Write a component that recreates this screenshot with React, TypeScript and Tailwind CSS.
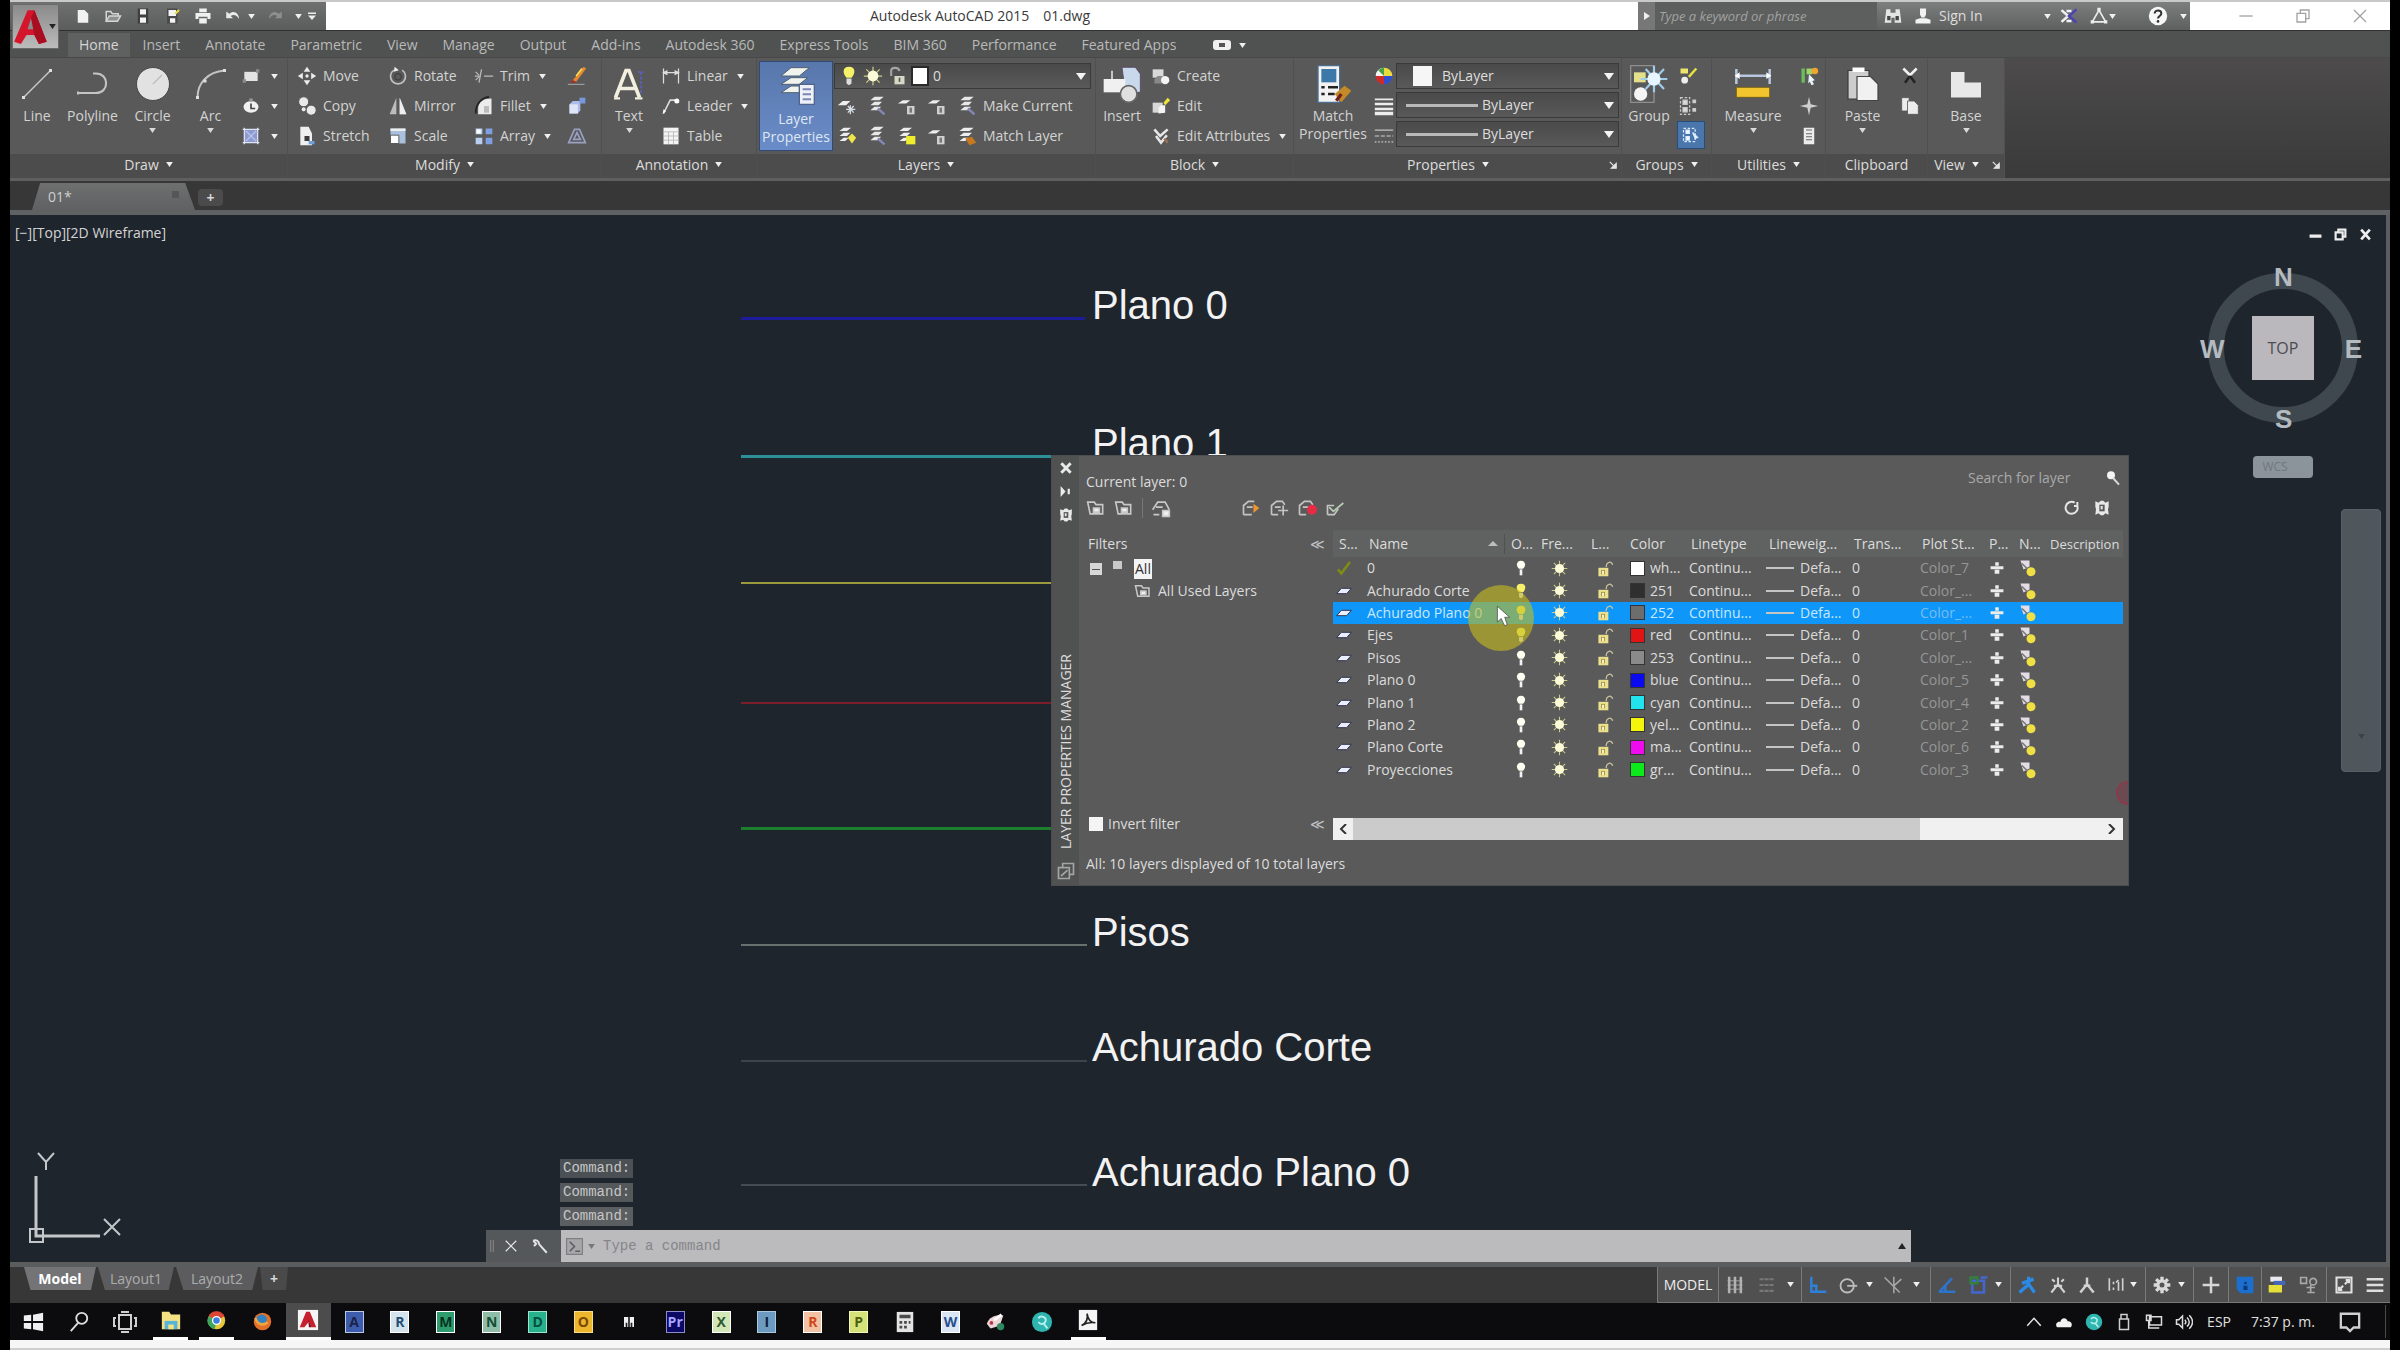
import { ReactNode } from "react";

const icons: Record<string, ReactNode> = {
  newFile: <path d="M5 4h9l5 5v12H5z" fill="#f1f1f1" />,
  open: (
    <g fill="none" stroke="#d5d5d5" strokeWidth="2">
      <path d="M3 19V6h6l2 3h8v3" />
      <path d="M3 19l4-7h15l-4 7z" fill="#8f8f8f" />
    </g>
  ),
  save: (
    <g>
      <path d="M5 2h14v20H5z" fill="#3f3f3f" />
      <path d="M8 3h8v7H8zM8 14h8v7H8z" fill="#f4f4f4" />
    </g>
  ),
  saveAs: (
    <g>
      <path d="M4 2h14v20H4z" fill="#4a4a4a" />
      <path d="M6 4h10v8H6zM8 15h7v6H8z" fill="#f4f4f4" />
      <path d="M14 8l5-5 2 2-5 5z" fill="#e7dc3a" />
    </g>
  ),
  print: (
    <g fill="#f0f0f0">
      <path d="M7 2h10v5H7z" />
      <path d="M2 8h20v8h-4v-3H6v3H2z" />
      <path d="M7 15h10v7H7z" />
    </g>
  ),
  undo: <path d="M3 6v9h9l-3-3c4-3 8-1 11 4 0-8-7-12-13-7z" fill="#e9e9e9" />,
  redo: <path d="M21 6v9h-9l3-3c-4-3-8-1-11 4 0-8 7-12 13-7z" fill="#8d8f8f" />,
  customize: (
    <g fill="#ededed">
      <path d="M4 5h16v3H4zM4 11h16l-8 9z" />
    </g>
  ),
  binoculars: (
    <g fill="#e4e4e4">
      <path d="M4 4h5v4h6V4h5l2 16h-8v-6h-4v6H2z" />
      <path d="M5 12h4v5H5zM15 12h4v5h-4z" fill="#444" />
    </g>
  ),
  person: (
    <g fill="#f2f2f2">
      <path d="M8 2h8v8l-2 4h-4l-2-4z" />
      <path d="M2 17l6-2h8l6 2v5H2z" />
    </g>
  ),
  exchange: (
    <g fill="none" strokeWidth="3">
      <path d="M3 5l8 7-8 7" stroke="#f1f1f1" />
      <path d="M21 4l-9 8 9 8" stroke="#4a43b8" />
      <path d="M9 6h6M9 18h6" stroke="#f1f1f1" />
    </g>
  ),
  a360: (
    <g fill="none" stroke="#ececec" strokeWidth="2">
      <path d="M12 5L4 19h16z" />
      <path d="M10 2h4v4h-4zM2 17h4v4H2zM18 17h4v4h-4z" fill="#ececec" stroke="none" />
    </g>
  ),
  help: (
    <g>
      <circle cx="12" cy="12" r="11" fill="#f7f7f7" />
      <path d="M8 9c0-5 8-5 8 0 0 3-4 3-4 6" fill="none" stroke="#333" strokeWidth="2.4" />
      <circle cx="12" cy="18.500" r="1.600" fill="#333" />
    </g>
  ),
  line: (
    <g>
      <path d="M3 21L21 3" stroke="#c9c9c9" strokeWidth="1" />
      <path d="M2 20h2v2H2zM20 2h2v2h-2z" fill="#e0e0e0" />
    </g>
  ),
  polyline: <path d="M2 18h12c9 0 9-13 0-13h-2M2 17v2" fill="none" stroke="#c4c4c4" strokeWidth="1.400" />,
  circle: (
    <g>
      <circle cx="12" cy="12" r="11" fill="#e2e2e2" stroke="#3f3f3f" strokeWidth=".6" />
      <path d="M12 12l6-6" stroke="#bdbdbd" strokeWidth="1" />
    </g>
  ),
  arc: (
    <g>
      <path d="M3 21C3 11 10 4 21 3" fill="none" stroke="#c4c4c4" strokeWidth="1.300" />
      <path d="M2 20h2v2H2zM7 9h2v2H7zM20 2h2v2h-2z" fill="#e0e0e0" />
    </g>
  ),
  rectangle: (
    <g>
      <path d="M4 7h16v11H4z" fill="#e4e4e4" />
      <path d="M2 16h4v4H2zM18 4h4v4h-4z" fill="#8c8c8c" />
    </g>
  ),
  ellipse: (
    <g>
      <ellipse cx="12" cy="13" rx="9" ry="7" fill="#f0f0f0" />
      <path d="M12 9v6h5" fill="none" stroke="#444" strokeWidth="2" />
      <path d="M10 3h4v4h-4z" fill="#999" />
    </g>
  ),
  hatch: (
    <g>
      <path d="M4 4h16v16H4z" fill="#8d9bd2" />
      <path d="M6 18L18 6M6 6l12 12" stroke="#b9c3ea" strokeWidth="1.500" />
      <path d="M2 4h20M2 20h20M4 2v20M20 2v20" stroke="#dfe3f4" strokeWidth="1.500" />
    </g>
  ),
  move: (
    <g fill="#ececec">
      <path d="M12 1l4 6H8zM12 23l4-6H8zM1 12l6-4v8zM23 12l-6-4v8z" />
      <circle cx="12" cy="12" r="2" />
    </g>
  ),
  copy: (
    <g fill="#e9e9e9" stroke="#4a4a4a">
      <circle cx="8" cy="7" r="6" />
      <circle cx="17" cy="17" r="6" />
      <circle cx="8" cy="16" r="3" />
    </g>
  ),
  stretch: (
    <g>
      <path d="M4 1h10l4 8v14H4z" fill="#f0f0f0" />
      <path d="M9 12h6v6H9z" fill="#3a3a3a" />
      <path d="M14 18h7v4h-7z" fill="#6f9fd6" />
    </g>
  ),
  rotate: (
    <g fill="none">
      <path d="M7 5a9 9 0 1 0 10 0" stroke="#c0c0c0" strokeWidth="2" />
      <path d="M8 1l-1 6 6-2z" fill="#eee" />
      <circle cx="12" cy="13" r="4" stroke="#333" strokeWidth="1" />
    </g>
  ),
  mirror: (
    <g>
      <path d="M10 2v20H2zM14 2v20h8z" fill="#bdbdbd" />
      <path d="M14 2v20h8z" fill="#eee" />
    </g>
  ),
  scale: (
    <g>
      <path d="M3 3h18v18H3z" fill="#a9c1dd" />
      <path d="M3 3h18v3H3z" fill="#eee" />
      <path d="M3 11h10v10H3z" fill="#fff" stroke="#444" />
    </g>
  ),
  trim: (
    <g stroke="#bcbcbc" strokeWidth="1.500" fill="none">
      <path d="M1 12h6M12 12h11M9 4L6 20" />
      <path d="M2 7l4 4M2 17l4-4" />
    </g>
  ),
  fillet: (
    <g>
      <path d="M5 22V14C6 7 11 3 21 3v19z" fill="#ececec" />
      <path d="M2 21C2 9 9 2 18 1" fill="none" stroke="#222" strokeWidth="2" />
      <path d="M12 12h6v8h-6z" fill="#bbb" />
    </g>
  ),
  array: (
    <g>
      <path d="M2 3h8v7H2zM2 14h8v8H2z" fill="#b8cdf0" />
      <path d="M14 3h8v7h-8zM14 14h8v8h-8z" fill="#7f9fe0" />
      <path d="M3 4h5v5H3z" fill="#fff" />
    </g>
  ),
  erase: (
    <g>
      <path d="M20 1L7 17l4 2L23 3z" fill="#e8892c" />
      <path d="M7 17l-3 4 7-2z" fill="#c02222" />
      <path d="M1 22h20" stroke="#bcbcbc" strokeWidth="1" />
      <path d="M18 3l-7 9" stroke="#f6e058" strokeWidth="2" />
    </g>
  ),
  explode: (
    <g>
      <path d="M3 10l4-4h9v11l-3 4H3z" fill="#aebde8" />
      <path d="M3 10h10v11H3z" fill="#dfe5f7" />
      <path d="M15 2h7v7h-7z" fill="#7897dc" />
    </g>
  ),
  offset: <path d="M2 20L9 4h6l7 16zM8 16h8L12 8z" fill="none" stroke="#9aa1c4" strokeWidth="2" />,
  text: (
    <g fill="none">
      <path d="M3 21L10 3h2l7 18M6 15h10" stroke="#f2efe0" strokeWidth="2.400" />
      <path d="M2 21.500h4M16 21.500h5" stroke="#f2efe0" strokeWidth="1.500" />
      <path d="M18 4h4M20 4v14" stroke="#5b61c9" strokeWidth="1" strokeDasharray="2 1" />
    </g>
  ),
  linear: <path d="M3 3v18M21 3v18M3 8h18M3 8l4-2v4zM21 8l-4-2v4z" fill="#ddd" stroke="#ddd" strokeWidth="1.500" />,
  leader: (
    <g fill="none">
      <path d="M3 21L11 5h6" stroke="#d8d8d8" strokeWidth="2" />
      <circle cx="19" cy="6" r="3" fill="#fff" />
      <path d="M2 22l1-6 3 2z" fill="#fff" />
    </g>
  ),
  table: (
    <g>
      <path d="M3 2h18v20H3z" fill="#f4f4f4" />
      <path d="M3 7h18M9 7v15M15 7v15M3 12h18M3 17h18" stroke="#b6b6b6" strokeWidth="1" />
    </g>
  ),
  layerProps: (
    <g>
      <path d="M3 6l6-5h11l-6 5zM3 11l6-4h10l-5 4zM3 16l6-4h8l-3 4z" fill="#f1f3ee" stroke="#50606e" strokeWidth=".6" />
      <path d="M14 11h9v12h-9z" fill="#eef1f8" stroke="#52648c" strokeWidth=".8" />
      <path d="M16 14h5M16 17h5M16 20h5" stroke="#7a87b4" strokeWidth="1.200" />
    </g>
  ),
  bulb: (
    <g>
      <path d="M12 1c-8 0-8 8-3 13h6c5-5 5-13-3-13z" fill="#f6f06a" />
      <path d="M9 15h6v6l-3 2-3-2z" fill="#ddd" />
    </g>
  ),
  sun: (
    <g>
      <path d="M12 1v22M1 12h22M4 4l16 16M20 4L4 20" stroke="#cdcc8a" strokeWidth="1.500" />
      <circle cx="12" cy="12" r="6.500" fill="#fbfbd8" />
    </g>
  ),
  unlock: (
    <g>
      <path d="M5 12V6c0-5 9-5 10 0" fill="none" stroke="#a5a5a5" strokeWidth="2.500" />
      <path d="M9 12h12v10H9z" fill="#d8d8c6" />
      <path d="M14 14h2v5h-2z" fill="#555" />
    </g>
  ),
  layerA: (
    <g>
      <path d="M1 9l6-4h9l-5 4z" fill="#eee" />
      <path d="M12 12h9v10h-9z" fill="#d0d0d0" />
      <path d="M15 14h3v6h-3z" fill="#777" />
    </g>
  ),
  layerB: (
    <g>
      <path d="M4 5l5-4h11l-5 4zM4 11l5-4h9l-4 4zM4 17l5-4h8l-4 4z" fill="#e8e8e8" />
      <path d="M13 15l8 7" stroke="#8487b5" strokeWidth="3" />
    </g>
  ),
  layerSun: (
    <g>
      <path d="M1 11l6-5h9l-5 5z" fill="#eee" />
      <path d="M16 11v11M11 16h11M13 12l7 8M20 12l-7 8" stroke="#d7dfe6" strokeWidth="1.500" />
    </g>
  ),
  layerYellow: (
    <g>
      <path d="M3 6l5-4h10l-5 4zM3 12l5-4h8l-4 4zM3 18l5-4h6l-4 4z" fill="#ededed" />
      <path d="M11 12h11v10H11z" fill="#eeee2e" />
    </g>
  ),
  layerBulb: (
    <g>
      <path d="M3 6l5-4h9l-5 4zM3 12l5-4h8l-4 4zM3 18l5-4h6l-4 4z" fill="#ededed" />
      <path d="M18 9l5 5-5 7-5-7z" fill="#f0e648" />
    </g>
  ),
  layerBrush: (
    <g>
      <path d="M3 6l5-4h12l-5 4zM3 12l5-4h10l-4 4zM3 18l5-4h6l-4 4z" fill="#ededed" />
      <path d="M10 15l8-2 5 7-8 3z" fill="#c8781f" />
    </g>
  ),
  insert: (
    <g>
      <path d="M12 2h8l3 4v11h-9z" fill="#c9d8ea" stroke="#546" strokeWidth=".5" />
      <path d="M1 9h13v8H1z" fill="#f0f0f0" />
      <circle cx="16" cy="18" r="5" fill="#e0e0e0" stroke="#666" />
      <path d="M6 4v5" stroke="#ddd" />
    </g>
  ),
  createBlock: (
    <g>
      <path d="M2 4h13v10H2z" fill="#d8d8d8" />
      <path d="M4 16l4-4h6v9H4z" fill="#888" />
      <circle cx="17" cy="17" r="5" fill="#f4f4f4" />
    </g>
  ),
  editBlock: (
    <g>
      <path d="M2 8h12v12H2z" fill="#d8d8d8" />
      <path d="M9 14l3-3h5v9l-8 1z" fill="#f4f4f4" />
      <path d="M15 8l5-6 3 3-6 6z" fill="#efe33c" />
    </g>
  ),
  editAttr: (
    <g fill="none" stroke="#e8e8e8" strokeWidth="3">
      <path d="M4 4l7 8 9-8M6 12l6 8 7-9" />
      <path d="M16 15l4 5" stroke="#9a6f55" />
    </g>
  ),
  matchProps: (
    <g>
      <path d="M3 1h13v22H3z" fill="#f2f2f2" stroke="#4a6f93" strokeWidth=".8" />
      <path d="M5 3h9v8H5z" fill="#3c78a8" />
      <path d="M5 14h2M9 14h6M5 18h2M9 18h4" stroke="#222" strokeWidth="1.500" />
      <path d="M13 18l6-5 4 3-6 7z" fill="#c58a28" />
      <path d="M14 22l3-4" stroke="#702020" strokeWidth="2" />
    </g>
  ),
  wheel: (
    <g>
      <path d="M12 12V2A10 10 0 0 1 22 12z" fill="#e9dc3c" />
      <path d="M12 12H2A10 10 0 0 1 12 2z" fill="#f3f3f3" />
      <path d="M12 12h10A10 10 0 0 1 12 22z" fill="#2e4fd0" />
      <path d="M12 12v10A10 10 0 0 1 2 12z" fill="#d02a2a" />
      <path d="M12 12L5 5a10 10 0 0 1 7-3z" fill="#45a345" />
    </g>
  ),
  weights: <path d="M1 3h22v2H1zM1 8h22v3H1zM1 14h22v3H1zM1 19h22v4H1z" fill="#ececec" />,
  types: (
    <g stroke="#a8a8a8" strokeWidth="2">
      <path d="M1 5h22" />
      <path d="M1 12h22" strokeDasharray="5 2" />
      <path d="M1 19h22" strokeDasharray="2 2" />
    </g>
  ),
  group: (
    <g>
      <path d="M1 1h14v22H1z" fill="none" stroke="#8f8f8f" strokeWidth=".8" />
      <path d="M3 5h7v6H3z" fill="#e3df8b" />
      <circle cx="7" cy="18" r="4" fill="#f4f4f4" />
      <path d="M15 1v16M7 9h16M10 3l11 12M21 3L10 15" stroke="#9fcdec" strokeWidth="1.300" />
      <circle cx="15" cy="9" r="4" fill="#e6f5ff" />
    </g>
  ),
  groupEdit: (
    <g>
      <path d="M3 3h9v6H3z" fill="#ece76c" />
      <circle cx="8" cy="17" r="4" fill="#eee" />
      <path d="M13 13L22 3" stroke="#e6df3e" strokeWidth="3" />
    </g>
  ),
  ungroup: (
    <g fill="none" stroke="#c9c9c9" strokeWidth="1.500">
      <path d="M3 2h11v20H3z" strokeDasharray="3 2" />
      <path d="M6 5h5v5H6zM6 14h5v5H6zM18 5h3v3h-3zM18 15h3v3h-3z" fill="#ddd" />
    </g>
  ),
  groupSelect: (
    <g fill="none" stroke="#d8ebff" strokeWidth="1.500">
      <path d="M3 4h14v16H3z" strokeDasharray="3 2" />
      <path d="M6 6h4v4H6zM6 14h4v4H6z" fill="#fff" />
      <path d="M14 9l6 6-3 1z" fill="#fff" />
    </g>
  ),
  measure: (
    <g>
      <path d="M2 3v9M22 3v9M2 7h20" stroke="#b9c6e0" strokeWidth="1.500" />
      <path d="M1 7l3-2v4zM23 7l-3-2v4z" fill="#fff" />
      <path d="M2 14h20v6H2z" fill="#f2c52f" stroke="#6e5a15" strokeWidth=".5" />
    </g>
  ),
  quickSelect: (
    <g>
      <path d="M3 3h4v17H3z" fill="#6abf5b" />
      <path d="M9 3h7v7H9z" fill="#9fd36c" />
      <circle cx="19" cy="6" r="4" fill="#f0a52c" />
      <path d="M12 10l7 7-3 1 2 4-3 1-2-4-2 2z" fill="#e9f3fb" />
    </g>
  ),
  point: <path d="M12 1l2 9 9 2-9 2-2 9-2-9-9-2 9-2z" fill="#cfcfcf" />,
  calc: (
    <g>
      <path d="M5 1h14v22H5z" fill="#ececec" />
      <path d="M8 4h8M8 9h8M8 13h8M8 17h8" stroke="#666" strokeWidth="1.500" />
    </g>
  ),
  paste: (
    <g>
      <path d="M2 3h14v19H2z" fill="#cdcdcd" stroke="#3c3c3c" strokeWidth=".8" />
      <path d="M5 1h8v3H5z" fill="#fff" />
      <path d="M8 7h9l5 5v11H8z" fill="#f1f1f1" stroke="#444" strokeWidth=".8" />
    </g>
  ),
  cut: (
    <g fill="none">
      <path d="M4 3l9 9M20 3l-9 9" stroke="#f0f0f0" strokeWidth="3" />
      <path d="M12 12l-6 8M12 12l6 8" stroke="#222" strokeWidth="3" />
    </g>
  ),
  copyClip: (
    <g fill="#ececec" stroke="#555">
      <path d="M2 2h9v16H2z" />
      <path d="M9 6h8l5 5v11H9z" />
    </g>
  ),
  paletteMenu: (
    <g fill="none" stroke="#a4a4a4" strokeWidth="2">
      <path d="M3 8h13v13H3zM8 8V3h13v13h-5M6 18l8-7" />
    </g>
  ),
  base: <path d="M2 4h9v7h11v10H2z" fill="#e8e8e8" />,
  slab: <path d="M1 16l7-8h15l-7 8z" fill="#e9eefc" stroke="#33344f" strokeWidth="1.500" />,
  check: <path d="M3 14l5 6L21 3" fill="none" stroke="#7e8c14" strokeWidth="4" />,
  bulbW: (
    <g>
      <path d="M12 1c-7 0-8 8-3 12h6c5-4 4-12-3-12z" fill="#fffff2" />
      <path d="M10 14h4v9h-4z" fill="#f2f2f2" />
    </g>
  ),
  lockY: (
    <g>
      <path d="M13 10c0-8 8-9 9-3" fill="none" stroke="#c9c2a0" strokeWidth="1.800" />
      <path d="M2 11h14v12H2z" fill="#ece08c" />
      <path d="M6 14h5v6H6z" fill="#8a7f40" />
      <path d="M7 15h3v5H7z" fill="#f6f2c4" />
    </g>
  ),
  plot: (
    <g fill="#ececec">
      <path d="M9 2h6v6H9zM1 9h22v5H1zM8 15h8v7H8z" />
    </g>
  ),
  newVp: (
    <g>
      <path d="M2 2h12v8l-8 4z" fill="#e3dce4" />
      <path d="M4 6l8 8" stroke="#777" strokeWidth="2" />
      <circle cx="16" cy="17" r="6" fill="#f0e044" />
    </g>
  ),
  folder: (
    <g fill="none" stroke="#c8c8c8" strokeWidth="2">
      <path d="M2 5h8l2 3h8v11H5z" />
      <path d="M9 12h7v5H9z" fill="#eee" />
    </g>
  ),
  states: (
    <g fill="none" stroke="#c8c8c8" strokeWidth="2">
      <path d="M2 14l6-9h9l5 9M6 11h8M3 20h7" />
      <path d="M14 15h8v7h-8z" fill="#eee" />
    </g>
  ),
  newLayer: (
    <g fill="none" stroke="#c4c4c4" strokeWidth="2">
      <path d="M3 20V9l6-5h7M3 20h10M7 11h7" />
      <path d="M15 7l7 5-7 6z" fill="#f0952e" stroke="none" />
    </g>
  ),
  newFrozen: (
    <g fill="none" stroke="#c4c4c4" strokeWidth="2">
      <path d="M3 20V9l6-5h7l3 4M3 20h8M7 11h7" />
      <path d="M17 9v12M11 15h12" />
    </g>
  ),
  delLayer: (
    <g fill="none" stroke="#c4c4c4" strokeWidth="2">
      <path d="M3 20V9l6-5h7l3 4M3 20h8M7 11h7" />
      <circle cx="18" cy="14" r="6" fill="#e62b46" stroke="none" />
    </g>
  ),
  setCurrent: (
    <g fill="none" strokeWidth="2">
      <path d="M3 20V9h8M3 20h8l5-7" stroke="#c4c4c4" />
      <path d="M5 11l5 5L22 6" stroke="#b7d0b4" />
    </g>
  ),
  refresh: <path d="M16 4a9 9 0 1 0 4 5M20 3v6h-5" fill="none" stroke="#e6e6e6" strokeWidth="3" />,
  gear: (
    <g>
      <path d="M2 2l5 2 3-3h4l3 3 5-2v8l-1 4 1 8-5-2-3 3h-4l-3-3-5 2 1-8-1-4z" fill="#e8e8e8" />
      <path d="M8 7h8v10H8z" fill="#5a5a5a" />
      <path d="M10 9h3v5h-3z" fill="#e8e8e8" />
    </g>
  ),
  magnifier: (
    <g>
      <circle cx="9" cy="8" r="6" fill="#f4f4f4" />
      <path d="M12 12l9 10" stroke="#d8d8d8" strokeWidth="3" />
    </g>
  ),
  pin: <path d="M3 2l9 10-9 10zM16 7h4v10h-4z" fill="#ededed" />,
  grip: <path d="M3 3h2v18H3zM7 3h2v18H7z" fill="#7d7d7d" />,
  close: <path d="M4 4l16 16M20 4L4 20" stroke="#eaeaea" strokeWidth="5" fill="none" />,
  closeThin: <path d="M3 3l18 18M21 3L3 21" stroke="currentColor" strokeWidth="2" fill="none" />,
  minimize: <path d="M2 12h20" stroke="currentColor" strokeWidth="2" />,
  restore: <path d="M3 8h13v13H3zM8 8V3h13v13h-5" fill="none" stroke="currentColor" strokeWidth="2" />,
  closeBold: <path d="M4 3l16 18M20 3L4 21" stroke="currentColor" strokeWidth="5" fill="none" />,
  minimizeBold: <path d="M1 15h22" stroke="currentColor" strokeWidth="6" />,
  restoreBold: <path d="M3 8h13v13H3zM8 8V3h13v13h-5" fill="none" stroke="currentColor" strokeWidth="4" />,
  wrench: (
    <path d="M3 5c3-2 8 0 8 5l10 11M3 5l4 4-3 3" fill="none" stroke="#e6e6e6" strokeWidth="2.500" />
  ),
  prompt: (
    <g fill="none">
      <path d="M2 2h20v20H2z" stroke="#7f7f82" strokeWidth="1.500" fill="#a7a7aa" />
      <path d="M6 6l6 6-6 6M13 18h6" stroke="#5e5e62" strokeWidth="2" />
    </g>
  ),
  grid: (
    <g stroke="#b2b2b2">
      <path d="M5 2v20M12 2v20M19 2v20" strokeWidth="3" />
      <path d="M3 7h18M3 12h18M3 17h18" strokeWidth="1" />
    </g>
  ),
  snap: <path d="M3 5h18M3 12h18M3 19h18" stroke="#777" strokeWidth="2.500" strokeDasharray="5 1" />,
  ortho: <path d="M4 2v18h18M4 13h6v7" fill="none" stroke="#2f80d8" strokeWidth="3" />,
  polar: (
    <g fill="none" stroke="#bdbdbd" strokeWidth="2.200">
      <circle cx="11" cy="13" r="8" />
      <path d="M11 13h12" />
    </g>
  ),
  iso: <path d="M2 3l18 18M13 2v20M13 13L22 5" fill="none" stroke="#a9a9a9" strokeWidth="1.800" />,
  track: <path d="M3 20L18 4M2 20h20M10 13v7" fill="none" stroke="#2c74cc" strokeWidth="3" />,
  osnap: (
    <g fill="none" strokeWidth="3">
      <path d="M4 7h14v14H4z" stroke="#4466cf" />
      <path d="M2 3h8v7H2z" stroke="#32803c" />
      <path d="M14 3h8" stroke="#4466cf" />
    </g>
  ),
  annoBlue: <path d="M14 2v9L3 21M14 11l7 10M6 10l14-5" fill="none" stroke="#2b8ae6" strokeWidth="4" />,
  anno: <path d="M12 3v8L4 21M12 11l8 10M5 5l3 3M19 5l-3 3M7 13h10" fill="none" stroke="#d2d2d2" strokeWidth="2.500" />,
  annoScale: <path d="M12 3v8L4 21M12 11l8 10M8 13h8" fill="none" stroke="#d2d2d2" strokeWidth="3" />,
  ratio: (
    <g fill="none" stroke="#cfcfcf" strokeWidth="2">
      <path d="M4 4v15M20 4v15M9 8v3M9 15v3M15 8v11M12 9l3-3" />
    </g>
  ),
  cog: (
    <g>
      <path d="M12 2v20M2 12h20M5 5l14 14M19 5L5 19" stroke="#d9d9d9" strokeWidth="4" />
      <circle cx="12" cy="12" r="7" fill="#d9d9d9" />
      <circle cx="12" cy="12" r="3" fill="#555" />
    </g>
  ),
  plus: <path d="M12 2v20M2 12h20" stroke="#d6d6d6" strokeWidth="3" />,
  isolate: (
    <g>
      <path d="M2 2h20v20H9c-4 0-7-4-7-8z" fill="#1c6fce" />
      <path d="M11 8h3v3h-3zM10 13h5v5h-5z" fill="#0c3c78" />
    </g>
  ),
  hardware: (
    <g>
      <path d="M4 2h14v6H4z" fill="#e9e9f0" />
      <path d="M2 12h16v9H2z" fill="#e6e03a" />
      <path d="M8 7h14v5H8z" fill="#4866b8" />
    </g>
  ),
  objects: (
    <g fill="none" stroke="#a8a8a8" strokeWidth="2">
      <path d="M2 3h7v7H2z" />
      <circle cx="17" cy="8" r="4" />
      <path d="M9 15h10M14 12v9M10 21h9" />
    </g>
  ),
  clean: (
    <g fill="none" stroke="#e0e0e0" strokeWidth="2.500">
      <path d="M3 3h18v18H3z" />
      <path d="M13 11l5-5M6 18l5-5M14 6h4v4M6 14v4h4" />
    </g>
  ),
  bars: <path d="M2 5h20M2 12h20M2 19h20" stroke="#dedede" strokeWidth="3" />,
  windows: <path d="M2 5l8-1v7H2zM12 4l11-2v9H12zM2 13h8v7l-8-1zM12 13h11v9l-11-2z" fill="#efefef" />,
  search: (
    <g fill="none" stroke="#dedede" strokeWidth="2">
      <circle cx="15" cy="8" r="6" />
      <path d="M11 13L3 22" />
    </g>
  ),
  taskView: (
    <g fill="none" stroke="#cfcfcf" strokeWidth="2">
      <path d="M6 5h12v14H6zM3 8H1v8h2M21 8h2v8h-2M8 2h8M8 22h8" />
    </g>
  ),
  explorer: (
    <g>
      <path d="M2 3h8l2 3h10v16H2z" fill="#f4e184" />
      <path d="M5 13h14v9H5z" fill="#59b5d8" />
      <path d="M9 17h6v5H9z" fill="#f4e184" />
    </g>
  ),
  chrome: (
    <g>
      <circle cx="12" cy="12" r="10" fill="#e8c83a" />
      <path d="M12 12L3 7a10 10 0 0 1 18 0z" fill="#dc4534" />
      <path d="M12 12L3 7a10 10 0 0 0 7 15z" fill="#3ea55a" />
      <circle cx="12" cy="12" r="4.500" fill="#3b7fe0" stroke="#fff" strokeWidth="1.500" />
    </g>
  ),
  firefox: (
    <g>
      <circle cx="12" cy="12" r="10" fill="#e1702a" />
      <circle cx="11" cy="10" r="6" fill="#2f83c4" />
      <path d="M4 8c2 8 9 9 14 5" fill="none" stroke="#f1a340" strokeWidth="3" />
    </g>
  ),
  paint: (
    <g>
      <path d="M2 14c3-8 10-10 18-9l-4 11-10 3z" fill="#ecd6d8" />
      <path d="M10 10l8-6" stroke="#fff" strokeWidth="3" />
      <circle cx="17" cy="17" r="4" fill="#2d8a62" />
      <circle cx="7" cy="13" r="2" fill="#b8384a" />
    </g>
  ),
  globe: (
    <g>
      <circle cx="12" cy="12" r="11" fill="#2fb5b0" />
      <path d="M8 8c3-4 9-1 8 3s-6 4-8 1M14 14l4 5" fill="none" stroke="#b9f0ee" strokeWidth="2" />
    </g>
  ),
  acrobat: (
    <g>
      <path d="M2 1h20v22H2z" fill="#f5f5f5" />
      <path d="M5 18c6-3 7-8 6-13 1 7 4 10 9 10-6-1-10 0-15 3z" fill="none" stroke="#222" strokeWidth="1.800" />
    </g>
  ),
  acad: (
    <g>
      <path d="M1 1h22v22H1z" fill="#f5f5f5" />
      <path d="M10 3h4l7 17h-5l-3-6-5 6H3z" fill="#c71f2d" />
      <path d="M12 11l4 9h-3z" fill="#7a0f18" />
    </g>
  ),
  calculator: (
    <g>
      <path d="M3 1h18v22H3z" fill="#e4e4e4" />
      <path d="M6 4h12v4H6zM6 11h3v3H6zM11 11h3v3h-3zM16 11h2v3h-2zM6 16h3v3H6zM11 16h3v3h-3z" fill="#4a4a4a" />
    </g>
  ),
  store: (
    <g fill="#f0f0f0">
      <path d="M6 6h12v12H6z" />
      <path d="M11 6h2v12h-2zM8 13h2v5H8zM14 13h2v5h-2z" fill="#222" />
    </g>
  ),
  chevronUp: <path d="M3 17l9-10 9 10" fill="none" stroke="#e6e6e6" strokeWidth="2" />,
  cloud: <path d="M2 18c-2-5 3-7 5-6 1-6 8-7 10-1 5-1 7 5 4 8H3z" fill="#f2f2f2" />,
  usb: <path d="M8 2h8v6H8zM6 8h12v14H6z" fill="none" stroke="#cfcfcf" strokeWidth="2" />,
  network: (
    <g fill="none" stroke="#dcdcdc" strokeWidth="2">
      <path d="M6 5h16v11H6zM10 20h9M2 3h6v7H2zM5 10v10h5" />
    </g>
  ),
  volume: (
    <g fill="none" stroke="#dcdcdc" strokeWidth="2">
      <path d="M2 9h3l5-5v16l-5-5H2zM13 9c2 2 2 4 0 6M16 6c4 4 4 8 0 12M19 3c6 6 6 12 0 18" />
    </g>
  ),
  action: <path d="M2 3h20v15h-6l-4 4-4-4H2z" fill="none" stroke="#d0d0d0" strokeWidth="2.500" />,
};

function Icon({ name, className = "size-5" }: { name: string; className?: string }) {
  return (
    <svg viewBox="0 0 24 24" className={`${className} shrink-0`} aria-hidden="true">
      {icons[name]}
    </svg>
  );
}

function Arrow({ className = "text-[#f0f0f0]" }: { className?: string }) {
  return (
    <svg viewBox="0 0 8 6" className={`h-[5px] w-[7px] shrink-0 ${className}`} aria-hidden="true">
      <path d="M0 0h8L4 6z" fill="currentColor" />
    </svg>
  );
}

function BigButton(props: { icon: string; label: string; className: string; size?: string; arrow?: boolean }) {
  return (
    <button className={`flex h-[90px] flex-col items-center ${props.className}`}>
      <span className="flex h-[46px] items-center justify-center">
        <Icon name={props.icon} className={props.size ?? "size-9"} />
      </span>
      <span className="leading-[18px]">{props.label}</span>
      {props.arrow && <Arrow className="mt-[3px] text-[#dadada]" />}
    </button>
  );
}

function SmallButton(props: { icon: string; label?: string; arrow?: boolean; size?: string }) {
  return (
    <button className="flex h-[30px] items-center gap-[5px]" aria-label={props.label ?? props.icon}>
      <span className="flex w-[22px] justify-center">
        <Icon name={props.icon} className={props.size} />
      </span>
      {props.label}
      {props.arrow && (
        <span className="ml-1">
          <Arrow />
        </span>
      )}
    </button>
  );
}

function Panel(props: { title: string; width: string; noArrow?: boolean; launcher?: boolean; children: ReactNode }) {
  return (
    <section className={`flex shrink-0 flex-col border-r border-[#505050] bg-[#595959] ${props.width}`}>
      <div className="flex h-24 pt-[3px]">{props.children}</div>
      <div className="flex h-6 items-center justify-center gap-[7px] bg-[#4c4c4c] pb-[3px] text-[#dcdcdc]">
        <span className={props.launcher ? "ml-auto" : ""}>{props.title}</span>
        {!props.noArrow && <Arrow />}
        {props.launcher && (
          <svg viewBox="0 0 10 10" className="mr-1 ml-auto size-2" aria-hidden="true">
            <path d="M1 1l5 5M9 3v6H3z" fill="#e4e4e4" stroke="#e4e4e4" strokeWidth="1.500" />
          </svg>
        )}
      </div>
    </section>
  );
}

function Combo(props: { label: string; value: string; children: ReactNode }) {
  return (
    <div className="relative flex h-[26px] items-center border border-[#3a3a3a] bg-linear-to-b from-[#4a4a4a] to-[#595959]">
      {props.children}
      <select
        aria-label={props.label}
        className="h-full min-w-0 flex-1 appearance-none bg-transparent text-[#dedede] outline-none"
      >
        <option>{props.value}</option>
      </select>
      <span className="pointer-events-none absolute right-1">
        <svg viewBox="0 0 10 7" className="h-[7px] w-[10px]" aria-hidden="true">
          <path d="M0 0h10L5 7z" fill="#f4f4f4" />
        </svg>
      </span>
    </div>
  );
}

const menuTabs = [
  "Insert",
  "Annotate",
  "Parametric",
  "View",
  "Manage",
  "Output",
  "Add-ins",
  "Autodesk 360",
  "Express Tools",
  "BIM 360",
  "Performance",
  "Featured Apps",
];

function TitleBar() {
  return (
    <header className="relative flex h-[30px] items-stretch border-t-2 border-[#c9c9c9] bg-white">
      <button
        aria-label="Application menu"
        className="absolute top-[2px] left-[2px] z-10 flex h-[45px] w-[47px] items-center border border-[#6a6a6a] bg-linear-to-b from-[#8a8a8a] to-[#bcbcbc]"
      >
        <svg viewBox="0 0 32 32" className="h-9 w-9" aria-hidden="true">
          <path d="M13 1h6l11 28-7 2-4-8h-7l-5 8-6-2z" fill="#d4152c" />
          <path d="M16 8l4 10h-7z" fill="#8b8b8b" />
          <path d="M19 1l11 28-7 2-4-8-3-15z" fill="#a80e20" />
        </svg>
        <Arrow className="text-[#222]" />
      </button>
      <div className="flex w-[316px] shrink-0 items-center bg-linear-to-b from-[#6f7170] to-[#5b5d5c] pl-[58px]">
        {["newFile", "open", "save", "saveAs", "print", "undo"].map((name) => (
          <button key={name} aria-label={name} className="flex w-[30px] justify-center">
            <Icon name={name} className="size-[18px]" />
          </button>
        ))}
        <Arrow />
        <button aria-label="redo" className="flex w-[40px] justify-center">
          <Icon name="redo" className="size-[18px]" />
        </button>
        <Arrow />
        <button aria-label="customize" className="ml-1 flex">
          <Icon name="customize" className="size-3" />
        </button>
      </div>
      <h1 className="flex flex-1 items-center justify-center gap-[14px] pr-1 text-[#3a3a3a]">
        <span>Autodesk AutoCAD 2015</span>
        <span>01.dwg</span>
      </h1>
      <div className="flex w-[552px] shrink-0 items-center bg-linear-to-b from-[#7d7f7e] to-[#5e605f] text-[#dedede]">
        <button aria-label="Show search" className="flex h-full w-[17px] items-center justify-center bg-[#777]">
          <svg viewBox="0 0 6 8" className="h-2 w-[6px]" aria-hidden="true">
            <path d="M0 0l6 4-6 4z" fill="#f0f0f0" />
          </svg>
        </button>
        <input
          aria-label="Search help"
          placeholder="Type a keyword or phrase"
          className="h-full w-[222px] bg-[#5d5f5e] pl-1 text-[13px] italic outline-none placeholder:text-[#a2a2a2]"
        />
        <button aria-label="Search" className="flex w-8 justify-center">
          <Icon name="binoculars" />
        </button>
        <button className="flex w-[120px] items-center gap-[7px] pl-[5px]">
          <Icon name="person" className="size-[18px]" />
          Sign In
        </button>
        <div className="flex items-center pl-[15px]">
          <Arrow />
          <button aria-label="Exchange" className="ml-2 flex">
            <Icon name="exchange" />
          </button>
          <button aria-label="Stay connected" className="ml-[10px] flex">
            <Icon name="a360" />
          </button>
          <Arrow />
          <button aria-label="Help" className="mr-3 ml-8 flex">
            <Icon name="help" />
          </button>
          <Arrow />
        </div>
      </div>
      <div className="flex w-[200px] shrink-0 items-center justify-end gap-[41px] pr-[22px] text-[#a3a3a3]">
        {["minimize", "restore", "closeThin"].map((name) => (
          <button key={name} aria-label={name} className="flex">
            <Icon name={name} className="size-4" />
          </button>
        ))}
      </div>
    </header>
  );
}

function Ribbon() {
  return (
    <>
      <nav className="flex h-[27px] items-end gap-px border-t border-[#2f3133] bg-[#505251] pl-[58px] text-[#b9b9b9]">
        <a href="#home" className="flex h-6 items-center bg-[#5f6060] px-[11px] text-[#d6d6d6]">
          Home
        </a>
        {menuTabs.map((tab) => (
          <a key={tab} href="#tab" className="flex h-6 items-center px-3">
            {tab}
          </a>
        ))}
        <button aria-label="Ribbon display" className="ml-6 flex h-6 items-center gap-2">
          <span className="flex h-[10px] w-[18px] items-center justify-center rounded-[3px] bg-[#f0f0f0]">
            <span className="h-1 w-[6px] bg-[#555]"></span>
          </span>
          <Arrow />
        </button>
      </nav>
      <div className="flex border-t border-b-3 border-t-[#484848] border-b-[#5f5f5f] bg-linear-to-b from-[#4d4b4b] to-[#3a3a3a] text-[#d3d3d3]">
        <Panel title="Draw" width="w-[278px]">
          <BigButton icon="line" label="Line" className="w-[54px]" />
          <BigButton icon="polyline" label="Polyline" className="w-[57px]" />
          <BigButton icon="circle" label="Circle" className="w-[63px]" arrow />
          <BigButton icon="arc" label="Arc" className="w-[53px]" arrow />
          <div className="flex flex-col pl-[3px]">
            <SmallButton icon="rectangle" arrow />
            <SmallButton icon="ellipse" arrow />
            <SmallButton icon="hatch" arrow />
          </div>
        </Panel>
        <Panel title="Modify" width="w-[314px]">
          <div className="flex w-[89px] flex-col pl-2 whitespace-nowrap">
            <SmallButton icon="move" label="Move" />
            <SmallButton icon="copy" label="Copy" />
            <SmallButton icon="stretch" label="Stretch" />
          </div>
          <div className="flex w-[88px] flex-col pl-[10px]">
            <SmallButton icon="rotate" label="Rotate" />
            <SmallButton icon="mirror" label="Mirror" />
            <SmallButton icon="scale" label="Scale" />
          </div>
          <div className="flex w-[91px] flex-col pl-2">
            <SmallButton icon="trim" label="Trim" arrow />
            <SmallButton icon="fillet" label="Fillet" arrow />
            <SmallButton icon="array" label="Array" arrow />
          </div>
          <div className="flex flex-col pl-[10px]">
            <SmallButton icon="erase" />
            <SmallButton icon="explode" />
            <SmallButton icon="offset" />
          </div>
        </Panel>
        <Panel title="Annotation" width="w-[155px]">
          <BigButton icon="text" label="Text" className="w-[54px]" arrow />
          <div className="flex flex-col pl-1">
            <SmallButton icon="linear" label="Linear" arrow />
            <SmallButton icon="leader" label="Leader" arrow />
            <SmallButton icon="table" label="Table" />
          </div>
        </Panel>
        <Panel title="Layers" width="w-[339px]">
          <button className="ml-[2px] flex h-[90px] w-[74px] flex-col items-center border border-[#2f4a78] bg-linear-to-b from-[#5877ac] to-[#6a8cc8] text-[#dfe7f4]">
            <Icon name="layerProps" className="mt-1 size-10" />
            <span className="mt-1 leading-[18px]">
              Layer
              <br />
              Properties
            </span>
          </button>
          <div className="mr-1 flex flex-1 flex-col pl-px">
            <div className="h-[30px] pt-[2px]">
              <Combo label="Layer" value="0">
                <span className="mr-1 flex items-center gap-1 pl-1">
                  <Icon name="bulb" />
                  <Icon name="sun" />
                  <Icon name="unlock" />
                  <span className="h-5 w-[18px] border-2 border-[#2a2a2a] bg-white"></span>
                </span>
              </Combo>
            </div>
            <div className="flex gap-2 pl-[2px]">
              <SmallButton icon="layerSun" />
              <SmallButton icon="layerB" />
              <SmallButton icon="layerA" />
              <SmallButton icon="layerA" />
              <SmallButton icon="layerB" label="Make Current" />
            </div>
            <div className="flex gap-2 pl-[2px]">
              <SmallButton icon="layerBulb" />
              <SmallButton icon="layerB" />
              <SmallButton icon="layerYellow" />
              <SmallButton icon="layerA" />
              <SmallButton icon="layerBrush" label="Match Layer" />
            </div>
          </div>
        </Panel>
        <Panel title="Block" width="w-[198px]">
          <BigButton icon="insert" label="Insert" className="w-[52px]" size="size-10" />
          <div className="flex flex-col pl-[2px] whitespace-nowrap">
            <SmallButton icon="createBlock" label="Create" />
            <SmallButton icon="editBlock" label="Edit" />
            <SmallButton icon="editAttr" label="Edit Attributes" arrow />
          </div>
        </Panel>
        <Panel title="Properties" width="w-[328px]" launcher>
          <BigButton icon="matchProps" label="Match Properties" className="w-[78px]" size="size-10" />
          <div className="flex flex-col pl-px">
            <SmallButton icon="wheel" />
            <SmallButton icon="weights" />
            <SmallButton icon="types" />
          </div>
          <div className="mr-[2px] flex flex-1 flex-col gap-[3px] pt-[2px] pl-px">
            <Combo label="Object color" value="ByLayer">
              <span className="mr-[10px] ml-4 h-5 w-[19px] bg-[#f6f6f6]"></span>
            </Combo>
            <Combo label="Lineweight" value="ByLayer">
              <span className="mr-1 ml-[9px] h-[3px] w-[72px] bg-[#b9b9b9]"></span>
            </Combo>
            <Combo label="Linetype" value="ByLayer">
              <span className="mr-1 ml-[9px] h-[3px] w-[72px] bg-[#b9b9b9]"></span>
            </Combo>
          </div>
        </Panel>
        <Panel title="Groups" width="w-[90px]">
          <BigButton icon="group" label="Group" className="w-[54px]" size="size-10" />
          <div className="flex flex-col pl-px">
            <SmallButton icon="groupEdit" />
            <SmallButton icon="ungroup" />
            <button aria-label="Group selection" className="flex h-7 w-7 items-center justify-center border border-[#274d7c] bg-[#4a76ac]">
              <Icon name="groupSelect" />
            </button>
          </div>
        </Panel>
        <Panel title="Utilities" width="w-[114px]">
          <BigButton icon="measure" label="Measure" className="w-[82px]" size="size-10" arrow />
          <div className="flex flex-col pl-1">
            <SmallButton icon="quickSelect" />
            <SmallButton icon="point" />
            <SmallButton icon="calc" size="size-[18px]" />
          </div>
        </Panel>
        <Panel title="Clipboard" width="w-[102px]" noArrow>
          <BigButton icon="paste" label="Paste" className="w-[73px]" arrow />
          <div className="flex flex-col">
            <SmallButton icon="cut" />
            <SmallButton icon="copyClip" />
          </div>
        </Panel>
        <Panel title="View" width="w-[77px]" launcher>
          <BigButton icon="base" label="Base" className="w-[77px]" arrow />
        </Panel>
      </div>
    </>
  );
}

const labelText = "absolute left-[1082px] whitespace-nowrap font-['Liberation_Sans',Arial,sans-serif] text-[40px] leading-10 text-[#f2f2f2]";

function Drawing() {
  return (
    <>
      <div className="absolute top-[102px] left-[731px] h-[3px] w-[344px] bg-[#1c1c9a]"></div>
      <p className={`${labelText} top-[70px]`}>Plano 0</p>
      <div className="absolute top-[240px] left-[731px] h-[3px] w-[344px] bg-[#2d8f98]"></div>
      <p className={`${labelText} top-[208px]`}>Plano 1</p>
      <div className="absolute top-[367px] left-[731px] h-[2px] w-[344px] bg-[#9b9b3e]"></div>
      <div className="absolute top-[487px] left-[731px] h-[2px] w-[344px] bg-[#7d1c2a]"></div>
      <div className="absolute top-[612px] left-[731px] h-[3px] w-[344px] bg-[#1c7f2e]"></div>
      <div className="absolute top-[729px] left-[731px] h-[2px] w-[346px] bg-[#66716f]"></div>
      <p className={`${labelText} top-[697px]`}>Pisos</p>
      <div className="absolute top-[845px] left-[731px] h-[2px] w-[346px] bg-[#3f444c]"></div>
      <p className={`${labelText} top-[812px]`}>Achurado Corte</p>
      <div className="absolute top-[969px] left-[731px] h-[2px] w-[346px] bg-[#464b54]"></div>
      <p className={`${labelText} top-[937px]`}>Achurado Plano 0</p>
    </>
  );
}

function ViewCube() {
  const letter = "absolute text-[26px] leading-6 font-bold text-[#b3bbc1] font-['Liberation_Sans',Arial,sans-serif]";
  return (
    <div className="absolute top-[58px] right-[28px] size-[150px] rounded-full border-[16px] border-[#3f484e]">
      <div className="flex size-full items-center justify-center">
        <button className="h-16 w-[62px] bg-[#bab8bd] text-base text-[#4c4c52]">TOP</button>
      </div>
      <span className={`${letter} -top-6 left-[50px]`}>N</span>
      <span className={`${letter} top-12 -left-6`}>W</span>
      <span className={`${letter} top-12 -right-5`}>E</span>
      <span className={`${letter} -bottom-6 left-[51px]`}>S</span>
    </div>
  );
}

const layers = [
  { name: "0", color: "wh...", swatch: "bg-white", style: "Color_7" },
  { name: "Achurado Corte", color: "251", swatch: "bg-[#2f2f2f]", style: "Color_..." },
  { name: "Achurado Plano 0", color: "252", swatch: "bg-[#6d6d6d]", style: "Color_..." },
  { name: "Ejes", color: "red", swatch: "bg-[#e01414]", style: "Color_1" },
  { name: "Pisos", color: "253", swatch: "bg-[#8a8a8a]", style: "Color_..." },
  { name: "Plano 0", color: "blue", swatch: "bg-[#0a0af0]", style: "Color_5" },
  { name: "Plano 1", color: "cyan", swatch: "bg-[#22e4ee]", style: "Color_4" },
  { name: "Plano 2", color: "yel...", swatch: "bg-[#f4f40c]", style: "Color_2" },
  { name: "Plano Corte", color: "ma...", swatch: "bg-[#ee0cee]", style: "Color_6" },
  { name: "Proyecciones", color: "gr...", swatch: "bg-[#0cea1c]", style: "Color_3" },
];

const columns = [
  { label: "S...", width: "w-[30px]" },
  { label: "Name", width: "w-[142px]" },
  { label: "O...", width: "w-[30px]" },
  { label: "Fre...", width: "w-[50px]" },
  { label: "L...", width: "w-[39px]" },
  { label: "Color", width: "w-[61px]" },
  { label: "Linetype", width: "w-[78px]" },
  { label: "Lineweig...", width: "w-[85px]" },
  { label: "Trans...", width: "w-[68px]" },
  { label: "Plot St...", width: "w-[67px]" },
  { label: "P...", width: "w-[30px]" },
  { label: "N...", width: "w-[31px]" },
  { label: "Description", width: "w-[79px] text-[13px]" },
];

function LayerTable() {
  return (
    <table className="h-[251px] w-[790px] table-fixed border-collapse text-left whitespace-nowrap">
      <thead>
        <tr className="h-[27px] bg-[#606261]">
          {columns.map((col) => (
            <th key={col.label} className={`${col.width} overflow-hidden p-0 pl-[6px] font-normal`}>
              {col.label === "Name" ? (
                <span className="flex items-center justify-between border-r border-[#505050] pr-[6px]">
                  Name
                  <svg viewBox="0 0 10 5" className="h-[5px] w-[10px]" aria-hidden="true">
                    <path d="M0 5l5-5 5 5z" fill="#bdbdbd" />
                  </svg>
                </span>
              ) : (
                col.label
              )}
            </th>
          ))}
        </tr>
      </thead>
      <tbody>
        {layers.map((layer, i) => (
          <tr key={layer.name} className={i === 2 ? "bg-[#0e96f8] text-[#c8e8ff]" : ""}>
            <td className="p-0 pl-[3px]">
              <Icon name={i === 0 ? "check" : "slab"} className="size-4" />
            </td>
            <td className="p-0 pl-1 leading-5">{layer.name}</td>
            <td className="p-0 pl-2">
              <Icon name={i > 0 && i < 4 ? "bulb" : "bulbW"} className="size-4" />
            </td>
            <td className="p-0 pl-4">
              <Icon name="sun" className="size-[17px]" />
            </td>
            <td className="p-0 pl-3">
              <Icon name="lockY" className="size-[17px]" />
            </td>
            <td className="p-0 pl-[6px]">
              <span className="flex items-center gap-[5px] leading-5">
                <span className={`size-[15px] shrink-0 border border-[#333] ${layer.swatch}`}></span>
                {layer.color}
              </span>
            </td>
            <td className="p-0 pl-1 leading-5">Continu...</td>
            <td className="p-0 pl-[3px]">
              <span className="flex items-center gap-[6px] leading-5">
                <span className="h-[2px] w-7 shrink-0 bg-[#c4c4c4]"></span>
                Defa...
              </span>
            </td>
            <td className="p-0 pl-1 leading-5">0</td>
            <td className={`p-0 pl-1 leading-5 ${i === 2 ? "text-[#78bdf2]" : "text-[#969696]"}`}>{layer.style}</td>
            <td className="p-0 pl-[7px]">
              <Icon name="plot" className="size-[14px]" />
            </td>
            <td className="p-0 pl-[6px]">
              <Icon name="newVp" className="size-[18px]" />
            </td>
            <td className="p-0"></td>
          </tr>
        ))}
      </tbody>
    </table>
  );
}

function LayerManager() {
  return (
    <section
      aria-label="Layer Properties Manager"
      className="absolute top-[240px] left-[1041px] flex h-[431px] w-[1078px] overflow-hidden border border-[#4b4d4e] bg-[#5a5a5a] text-[#dcdcdc]"
    >
      <div className="flex w-7 flex-col items-center bg-[#505151] pb-1">
        <button aria-label="Close" className="flex h-6 items-center">
          <Icon name="close" className="size-[14px]" />
        </button>
        <button aria-label="Auto-hide" className="flex h-[23px] items-center">
          <Icon name="pin" className="size-[13px]" />
        </button>
        <button aria-label="Settings" className="flex h-6 items-center">
          <Icon name="gear" className="size-[14px]" />
        </button>
        <h2 className="mt-auto rotate-180 [writing-mode:vertical-rl]">LAYER PROPERTIES MANAGER</h2>
        <div className="mt-3 flex">
          <Icon name="paletteMenu" className="size-5" />
        </div>
      </div>
      <div className="flex flex-1 flex-col pr-[5px] pl-[7px]">
        <div className="flex h-9 items-center pt-2">
          <p className="flex-1 pt-2">Current layer: 0</p>
          <input
            aria-label="Search for layer"
            placeholder="Search for layer"
            className="w-[137px] bg-transparent outline-none placeholder:text-[#a9a9a9]"
          />
          <Icon name="magnifier" className="mr-[2px] size-4" />
        </div>
        <div className="flex h-[38px] items-center gap-2 pb-[6px]">
          <button aria-label="New property filter" className="flex">
            <Icon name="folder" />
          </button>
          <button aria-label="New group filter" className="flex">
            <Icon name="folder" />
          </button>
          <span className="h-5 w-px bg-[#777]"></span>
          <button aria-label="Layer states" className="mr-[62px] flex">
            <Icon name="states" />
          </button>
          {["newLayer", "newFrozen", "delLayer", "setCurrent"].map((name) => (
            <button key={name} aria-label={name} className="flex">
              <Icon name={name} />
            </button>
          ))}
          <button aria-label="refresh" className="mr-[6px] ml-auto flex">
            <Icon name="refresh" className="size-4" />
          </button>
          <button aria-label="settings" className="mr-[13px] flex">
            <Icon name="gear" className="size-4" />
          </button>
        </div>
        <div className="flex">
          <div className="flex w-[247px] flex-col pr-[8px]">
            <div className="flex h-[27px] items-center justify-between pl-[2px]">
              <h3>Filters</h3>
              <button aria-label="Collapse filters" className="text-[#c0c0c0]">
                ≪
              </button>
            </div>
            <ul className="pl-[4px]">
              <li className="flex h-6 items-center">
                <span className="flex size-3 items-center justify-center bg-[#d7d7d7]">
                  <span className="h-px w-2 bg-[#555]"></span>
                </span>
                <span className="mb-2 ml-[11px] h-2 w-[9px] bg-[#c9c9c9]"></span>
                <span className="ml-3 bg-[#f4f4f4] px-px leading-5 text-[#333]">All</span>
              </li>
              <li className="flex h-5 items-center gap-[6px] pl-11">
                <Icon name="folder" className="size-[18px]" />
                All Used Layers
              </li>
            </ul>
            <div className="mt-auto flex h-8 items-center justify-between pl-[3px]">
              <label className="flex items-center gap-[5px]">
                <input type="checkbox" className="size-[14px] appearance-none bg-[#f4f4f4]" />
                Invert filter
              </label>
              <button aria-label="Collapse tree" className="text-[#c0c0c0]">
                ≪
              </button>
            </div>
          </div>
          <div className="flex flex-1 flex-col gap-[37px]">
            <LayerTable />
            <div className="flex h-[22px] items-center bg-[#f0f0f0] text-[#333]">
              <button aria-label="Scroll left" className="flex w-5 justify-center">
                <svg viewBox="0 0 8 10" className="h-[10px] w-2" aria-hidden="true">
                  <path d="M7 0L2 5l5 5" fill="none" stroke="currentColor" strokeWidth="2" />
                </svg>
              </button>
              <div className="h-full w-[567px] bg-[#cbcbcb]"></div>
              <button aria-label="Scroll right" className="mr-[7px] ml-auto flex">
                <svg viewBox="0 0 8 10" className="h-[10px] w-2" aria-hidden="true">
                  <path d="M1 0l5 5-5 5" fill="none" stroke="currentColor" strokeWidth="2" />
                </svg>
              </button>
            </div>
          </div>
        </div>
        <p className="pt-[14px]">All: 10 layers displayed of 10 total layers</p>
      </div>
      <div className="absolute top-[325px] -right-3 size-6 rounded-full border-2 border-[#8a3a4c] bg-[#6c4a52]"></div>
    </section>
  );
}

function Pointer() {
  return (
    <div className="pointer-events-none absolute top-[370px] left-[1458px] size-[66px] rounded-full bg-[#c6bd1c]/60">
      <svg viewBox="0 0 12 18" className="absolute top-5 left-7 h-[22px] w-[15px]" aria-hidden="true">
        <path d="M1 1v13l3-3 3 6 2-1-2-6h4z" fill="#fff" stroke="#444" strokeWidth=".6" />
      </svg>
    </div>
  );
}

function Canvas() {
  return (
    <main className="relative flex-1 overflow-hidden border-r-4 border-[#5b5d60] bg-[#1f252d]">
      <p className="absolute top-2 left-[5px] text-[#d4d4d4]">[−][Top][2D Wireframe]</p>
      <div className="absolute top-[13px] right-[14px] flex gap-3 text-[#ededed]">
        {["minimizeBold", "restoreBold", "closeBold"].map((name) => (
          <button key={name} aria-label={name} className="flex">
            <Icon name={name} className="size-[13px]" />
          </button>
        ))}
      </div>
      <Drawing />
      <ViewCube />
      <button className="absolute top-[241px] right-[73px] h-[22px] w-[60px] rounded-sm bg-[#8b949a] pr-4 text-xs text-[#6f787e]">
        WCS
      </button>
      <div className="absolute top-[294px] right-[5px] flex h-[263px] w-10 flex-col items-center justify-end rounded-sm border border-[#566066] bg-[#4f575c] pb-8">
        <Arrow className="text-[#3b4347]" />
      </div>
      <LayerManager />
      <Pointer />
      <svg viewBox="0 0 100 96" className="absolute bottom-[14px] left-[16px] h-[96px] w-[100px]" aria-hidden="true">
        <g fill="none" stroke="#c3c7ca" strokeWidth="3">
          <path d="M10 24v60h64" />
          <path d="M4 77h13v13H4z" strokeWidth="2" />
          <path d="M12 1l8 9 8-9M20 10v8M78 67l16 16M94 67L78 83" strokeWidth="2" />
        </g>
      </svg>
      <div className="absolute bottom-[36px] left-[550px] flex flex-col gap-[5px] font-['Liberation_Mono',monospace] text-[#c6c6c6]">
        <p className="bg-[#4b5054] px-[3px] leading-[19px]">Command:</p>
        <p className="bg-[#54585b] px-[3px] leading-[19px]">Command:</p>
        <p className="bg-[#5c5f62] px-[3px] leading-[19px]">Command:</p>
      </div>
      <div className="absolute right-[475px] bottom-0 left-[476px] flex h-8 items-center bg-[#55585b]">
        <Icon name="grip" className="ml-[2px] h-6 w-4" />
        <button aria-label="Close command line" className="flex text-[#e6e6e6]">
          <Icon name="closeThin" className="size-[14px]" />
        </button>
        <button aria-label="Customize" className="mr-3 ml-[13px] flex">
          <Icon name="wrench" className="size-[18px]" />
        </button>
        <div className="flex h-full flex-1 items-center gap-1 bg-[#bbbbbd] pl-1">
          <Icon name="prompt" className="size-[19px]" />
          <Arrow className="text-[#777]" />
          <input
            aria-label="Command"
            placeholder="Type a command"
            className="flex-1 bg-transparent pl-1 font-['Liberation_Mono',monospace] outline-none placeholder:text-[#85858a]"
          />
          <svg viewBox="0 0 8 6" className="mr-[5px] h-[6px] w-2" aria-hidden="true">
            <path d="M4 0l4 6H0z" fill="#222" />
          </svg>
        </div>
      </div>
    </main>
  );
}

function StatusButton({ name, width }: { name: string; width: string }) {
  return (
    <button aria-label={name} className={`flex items-center justify-center ${width}`}>
      <Icon name={name} />
    </button>
  );
}

function StatusBar() {
  const group = "flex items-stretch border-l border-[#7a7a7a]";
  const tab = "flex h-[23px] items-center justify-center [clip-path:polygon(0_0,100%_0,93%_100%,9%_100%)]";
  return (
    <footer className="flex h-[41px] items-stretch border-t-5 border-[#5b5c5e] bg-[#373738]">
      <div className="flex items-start gap-[2px] pl-[14px]">
        <button className={`${tab} w-[72px] bg-[#747476] font-bold text-white`}>Model</button>
        <button className={`${tab} w-[76px] bg-[#5c5c5e] text-[#adadad]`}>Layout1</button>
        <button className={`${tab} w-[82px] bg-[#5c5c5e] text-[#adadad]`}>Layout2</button>
        <button className={`${tab} w-[28px] bg-[#4a4a4b] font-bold text-[#d8d8d8]`}>+</button>
      </div>
      <div className="ml-auto flex border-b border-[#7a7a7a] bg-[#505051]">
        <button className="w-[61px] border-l border-[#7a7a7a] text-[#ededed]">MODEL</button>
        <div className={`${group} w-[83px]`}>
          <StatusButton name="grid" width="w-8" />
          <StatusButton name="snap" width="w-8" />
          <span className="flex items-center pl-1"><Arrow /></span>
        </div>
        <div className={`${group} w-[129px]`}>
          <StatusButton name="ortho" width="w-8" />
          <StatusButton name="polar" width="w-[28px]" />
          <span className="flex items-center pl-1"><Arrow /></span>
          <StatusButton name="iso" width="w-10" />
          <span className="flex items-center"><Arrow /></span>
        </div>
        <div className={`${group} w-20`}>
          <StatusButton name="track" width="w-8" />
          <StatusButton name="osnap" width="w-8" />
          <span className="flex items-center"><Arrow /></span>
        </div>
        <div className={`${group} w-[135px]`}>
          <StatusButton name="annoBlue" width="w-8" />
          <StatusButton name="anno" width="w-[29px]" />
          <StatusButton name="annoScale" width="w-[29px]" />
          <StatusButton name="ratio" width="w-[29px]" />
          <span className="flex items-center"><Arrow /></span>
        </div>
        <div className={`${group} w-12`}>
          <StatusButton name="cog" width="w-[32px]" />
          <span className="flex items-center"><Arrow /></span>
        </div>
        <div className={group}>
          <StatusButton name="plus" width="w-[34px]" />
        </div>
        <div className={group}>
          <StatusButton name="isolate" width="w-8" />
        </div>
        <div className={group}>
          <StatusButton name="hardware" width="w-[30px]" />
          <StatusButton name="objects" width="w-[34px]" />
        </div>
        <div className={`${group} pr-px`}>
          <StatusButton name="clean" width="w-[33px]" />
          <StatusButton name="bars" width="w-[29px]" />
        </div>
      </div>
    </footer>
  );
}

function AppTile({ text, color }: { text: string; color: string }) {
  return (
    <span className={`flex h-[22px] w-[19px] items-center justify-center border text-sm leading-none font-bold ${color}`}>
      {text}
    </span>
  );
}

function TaskBar() {
  const tiles: { id: string; content: ReactNode; cell?: string }[] = [
    { id: "start", content: <Icon name="windows" className="size-[22px]" /> },
    { id: "search", content: <Icon name="search" className="size-[22px]" /> },
    { id: "task-view", content: <Icon name="taskView" className="size-6" /> },
    { id: "explorer", content: <Icon name="explorer" className="size-[22px]" />, cell: "border-b-3 border-white" },
    { id: "chrome", content: <Icon name="chrome" className="size-[21px]" />, cell: "border-b-3 border-white" },
    { id: "firefox", content: <Icon name="firefox" className="size-[21px]" /> },
    { id: "autocad", content: <Icon name="acad" className="size-[22px]" />, cell: "border-b-3 border-white bg-[#4c4c4c]" },
    { id: "civil", content: <AppTile text="A" color="border-[#b9c6e4] bg-[#3d5cae] text-[#1b2448]" /> },
    { id: "revit", content: <AppTile text="R" color="border-white bg-[#d5e3ec] text-[#1f4f74]" /> },
    { id: "max", content: <AppTile text="M" color="border-white bg-[#2e9c6e] text-[#06351f]" /> },
    { id: "navisworks", content: <AppTile text="N" color="border-white bg-[#8fbda8] text-[#155036]" /> },
    { id: "dynamo", content: <AppTile text="D" color="border-[#9fe4cf] bg-[#27b18d] text-[#064f3c]" /> },
    { id: "outlook", content: <AppTile text="O" color="border-[#f6dc8c] bg-[#eeb62c] text-[#7a4a04]" /> },
    { id: "store", content: <Icon name="store" className="size-5" /> },
    { id: "premiere", content: <AppTile text="Pr" color="border-[#8c8cc8] bg-[#0c0866] text-[#a7a4ff]" /> },
    { id: "excel", content: <AppTile text="X" color="border-white bg-[#d3e6b8] text-[#2f5a34]" /> },
    { id: "inventor", content: <AppTile text="I" color="border-[#a9c8dd] bg-[#6d9ac0] text-[#0c2138]" /> },
    { id: "powerpoint", content: <AppTile text="R" color="border-white bg-[#f2c2a4] text-[#d0471b]" /> },
    { id: "project", content: <AppTile text="P" color="border-[#f1f6b8] bg-[#d5e27a] text-[#4e5f10]" /> },
    { id: "calculator", content: <Icon name="calculator" className="size-[22px]" /> },
    { id: "word", content: <AppTile text="W" color="border-white bg-[#dbe6f4] text-[#264f8e]" /> },
    { id: "paint", content: <Icon name="paint" className="size-[22px]" /> },
    { id: "camtasia", content: <Icon name="globe" className="size-[22px]" /> },
    { id: "acrobat", content: <Icon name="acrobat" className="size-[22px]" />, cell: "border-b-3 border-white" },
  ];
  return (
    <div className="flex h-[37px] items-stretch bg-[#0c0c0e] text-[#e0e0e0]">
      <div className="flex w-[1101px]">
        {tiles.map((tile) => (
          <button key={tile.id} aria-label={tile.id} className="flex min-w-0 flex-1 justify-center">
            <span
              className={`flex h-full shrink-0 items-center justify-center ${tile.id === "autocad" ? "w-[45px]" : "w-[35px]"} ${tile.cell ?? ""}`}
            >
              {tile.content}
            </span>
          </button>
        ))}
      </div>
      <div className="ml-auto flex items-center">
        {["chevronUp", "cloud", "globe", "usb", "network", "volume"].map((name) => (
          <button key={name} aria-label={name} className="flex w-[30px] justify-center">
            <Icon name={name} className="size-[18px]" />
          </button>
        ))}
        <span className="pl-2">ESP</span>
        <span className="w-[84px] pl-5 whitespace-nowrap">7:37 p. m.</span>
        <button aria-label="Notifications" className="mr-6 ml-6 flex">
          <Icon name="action" className="size-[22px]" />
        </button>
        <span className="mr-1 h-[33px] w-px bg-[#4a4a4a]"></span>
      </div>
    </div>
  );
}

export default function App() {
  return (
    <div className="flex min-h-screen flex-col bg-black px-[10px] font-['Open_Sans','Noto_Sans',sans-serif] text-[14px] leading-5">
      <TitleBar />
      <Ribbon />
      <div className="flex h-[34px] items-end border-b-5 border-[#5f6163] bg-[#373737]">
        <button className="ml-[22px] flex h-[27px] w-[163px] items-center justify-between bg-linear-to-b from-[#6f6f6f] to-[#5f6163] px-4 text-[#cfcfcf] [clip-path:polygon(5%_0,94%_0,100%_100%,0_100%)]">
          01*
          <span className="mb-1 size-[7px] bg-[#565656]"></span>
        </button>
        <button
          aria-label="New tab"
          className="mb-1 ml-[3px] flex h-[17px] w-[25px] items-center justify-center rounded-sm bg-[#4b4b4b] font-bold text-[#d5d5d5]"
        >
          +
        </button>
      </div>
      <Canvas />
      <StatusBar />
      <TaskBar />
      <div className="h-[10px] border-b-2 border-[#cfcfcf] bg-[#f6f6f6]"></div>
    </div>
  );
}
